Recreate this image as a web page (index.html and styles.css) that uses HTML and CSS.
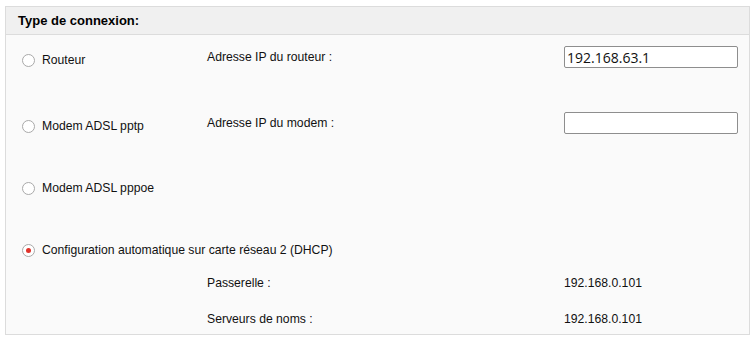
FILE: index.html
```html
<!DOCTYPE html>
<html lang="fr">
<head>
    <meta charset="UTF-8">
    <title>Type de connexion</title>
    <link rel="stylesheet" href="styles.css">
</head>
<body>
    <div class="panel">
        <div class="panel-header">Type de connexion:</div>
        <div class="panel-body">
            <div class="row first">
                <label class="option"><input type="radio" name="conn"> Routeur</label>
                <span class="field-label">Adresse IP du routeur :</span>
                <input type="text" class="text-input" value="192.168.63.1">
            </div>
            <div class="row wide">
                <label class="option"><input type="radio" name="conn"> Modem ADSL pptp</label>
                <span class="field-label">Adresse IP du modem :</span>
                <input type="text" class="text-input" value="">
            </div>
            <div class="row">
                <label class="option"><input type="radio" name="conn"> Modem ADSL pppoe</label>
            </div>
            <div class="row">
                <label class="option"><input type="radio" name="conn" checked> Configuration automatique sur carte réseau 2 (DHCP)</label>
            </div>
            <div class="row detail">
                <span></span>
                <span class="field-label">Passerelle :</span>
                <span class="field-value">192.168.0.101</span>
            </div>
            <div class="row detail">
                <span></span>
                <span class="field-label">Serveurs de noms :</span>
                <span class="field-value">192.168.0.101</span>
            </div>
        </div>
    </div>
</body>
</html>
```

FILE: styles.css
```css
body {
    margin: 6px 5px;
    font-family: "Liberation Sans", Arial, sans-serif;
    font-size: 12.2px;
    color: #111;
    background: #fff;
}

.panel {
    width: 743px;
    border: 1px solid #dcdcdc;
    background: #fafafa;
}

.panel-header {
    height: 27px;
    line-height: 27px;
    padding-left: 12px;
    background: #f0f0f0;
    border-bottom: 1px solid #dcdcdc;
    font-weight: bold;
    font-size: 13px;
    color: #000;
}

.panel-body {
    padding: 11px 0 4px 16px;
}

.row {
    display: grid;
    grid-template-columns: 185px 357px 174px;
    align-items: center;
    min-height: 22px;
    margin-top: 40px;
}

.row.first {
    margin-top: 0;
}

.row.wide {
    margin-top: 44px;
}

.row.detail {
    margin-top: 14px;
}

.option {
    display: flex;
    align-items: center;
    padding-top: 6px;
    line-height: 16px;
    white-space: nowrap;
}

.option input {
    appearance: none;
    -webkit-appearance: none;
    flex-shrink: 0;
    width: 13px;
    height: 13px;
    margin: 0 7px 0 0;
    border: 1px solid #a9a9a9;
    border-radius: 50%;
    background: #fff;
    display: grid;
    place-items: center;
}

.option input:checked::before {
    content: "";
    width: 5px;
    height: 5px;
    border-radius: 50%;
    background: #e0322a;
}

.field-label,
.field-value {
    line-height: 16px;
}

.text-input {
    box-sizing: border-box;
    width: 174px;
    height: 22px;
    margin: 0;
    padding: 0 2px;
    border: 1px solid #8e8e8e;
    border-radius: 2px;
    background: #fff;
    font-family: "Open Sans", sans-serif;
    font-size: 14px;
    color: #111;
}
```
